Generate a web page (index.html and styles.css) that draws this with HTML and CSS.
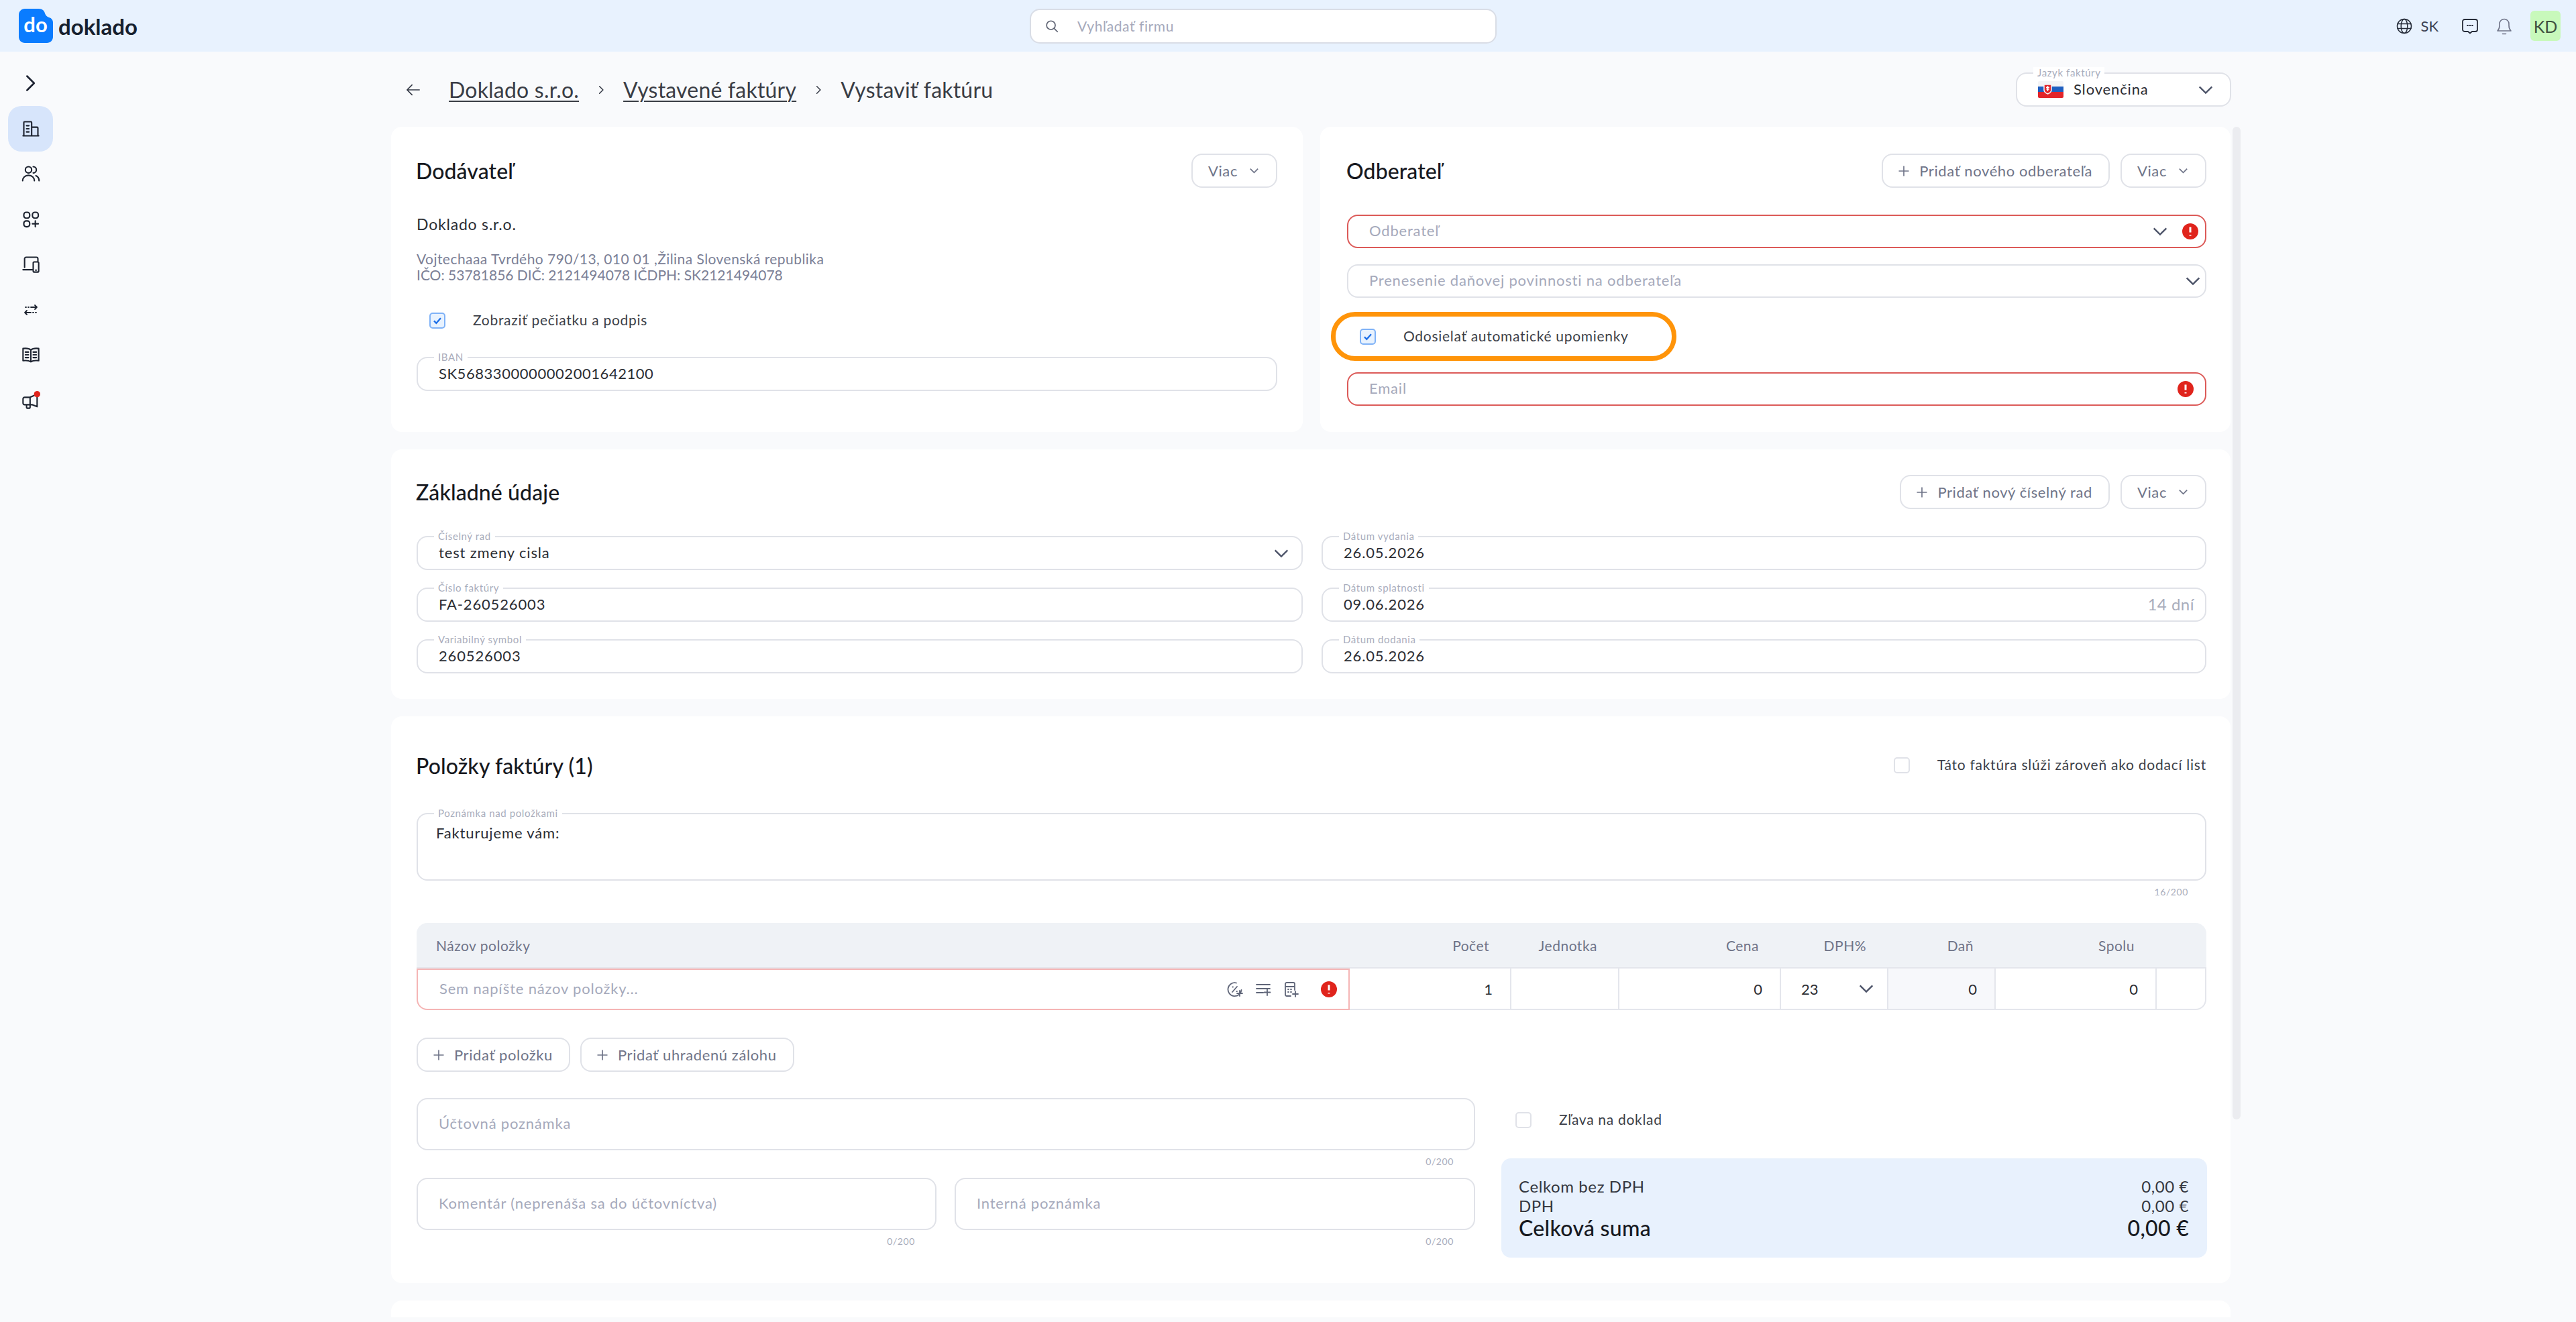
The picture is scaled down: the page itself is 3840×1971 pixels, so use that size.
FILE: index.html
```html
<!DOCTYPE html>
<html lang="sk">
<head>
    <meta charset="UTF-8">
    <meta name="viewport" content="width=device-width, initial-scale=1.0">
    <title>Vystaviť faktúru</title>
    <link rel="stylesheet" href="styles.css">
</head>
<body>

    <!-- shared icons -->
    <svg class="sprite" aria-hidden="true">
        <symbol id="chev" viewBox="0 0 24 24"><path d="M4 8l8 8 8-8"/></symbol>
        <symbol id="plus" viewBox="0 0 24 24"><path d="M12 3v18M3 12h18"/></symbol>
        <symbol id="check" viewBox="0 0 24 24"><path d="M6 12.5l4 4 8-9"/></symbol>
        <symbol id="err" viewBox="0 0 24 24"><circle class="err-bg" cx="12" cy="12" r="12"/><path class="err-mark" d="M12 5.5v8M12 17v1.5"/></symbol>
    </svg>

    <header class="topbar">
        <div class="brand">
            <svg class="logo" viewBox="0 0 51 51">
                <path class="logo-bg" d="M9 0h21c5 0 8 3 9 7 1 3 3 5 6 6 4 1 6 4 6 8v21c0 5-4 9-9 9H9c-5 0-9-4-9-9V9c0-5 4-9 9-9z"/>
                <text class="logo-text" x="25" y="35" text-anchor="middle">do</text>
            </svg>
            <span class="brand-name">doklado</span>
        </div>
        <div class="search">
            <svg class="ico search-ico" viewBox="0 0 24 24"><circle cx="10.5" cy="10.5" r="7"/><path d="M16 16l5 5"/></svg>
            <span>Vyhľadať firmu</span>
        </div>
        <div class="top-actions">
            <svg class="ico globe" viewBox="0 0 24 24"><circle cx="12" cy="12" r="10.5"/><ellipse cx="12" cy="12" rx="4.8" ry="10.5"/><path d="M2 8.5h20M2 15.5h20"/></svg>
            <span class="lang">SK</span>
            <svg class="ico chat" viewBox="0 0 26 24"><path d="M5 2h16a3 3 0 0 1 3 3v12a3 3 0 0 1-3 3h-5l-3 2.500-3-2.500H5a3 3 0 0 1-3-3V5a3 3 0 0 1 3-3z"/><path d="M9 11h1M12.500 11h1M16 11h1"/></svg>
            <svg class="ico bell" viewBox="0 0 24 26"><path d="M2 20c2-2 3-4 3-8V9.500a7 7 0 0 1 14 0V12c0 4 1 6 3 8z"/><path d="M9.500 24.500h5"/></svg>
            <div class="avatar">KD</div>
        </div>
    </header>

    <div class="layout">
        <nav class="sidebar">
            <svg class="ico toggle" viewBox="0 0 24 24"><path d="M8 3l9 9-9 9"/></svg>
            <a class="nav-item active"><svg class="ico" viewBox="0 0 24 24"><path d="M3 21V4a1 1 0 0 1 1-1h8a1 1 0 0 1 1 1v17M13 10h7a1 1 0 0 1 1 1v10M2 21h20M6.500 8h3M6.500 12h3M6.500 16h3"/></svg></a>
            <a class="nav-item"><svg class="ico" viewBox="0 0 24 24"><circle cx="9" cy="7" r="4"/><path d="M1.500 21c0-4 3-7 7.500-7s7.500 3 7.500 7M15 3a4 4 0 0 1 0 8M18.500 14.500c2.500 1 4 3.500 4 6.500"/></svg></a>
            <a class="nav-item"><svg class="ico" viewBox="0 0 24 24"><rect x="3" y="3" width="7.500" height="7.500" rx="3"/><rect x="14" y="3" width="7.500" height="7.500" rx="3"/><rect x="3" y="14" width="7.500" height="7.500" rx="3"/><path d="M17.700 14v7.500M14 17.700h7.500"/></svg></a>
            <a class="nav-item"><svg class="ico" viewBox="0 0 24 24"><path d="M4 16V5a2 2 0 0 1 2-2h13a2 2 0 0 1 2 2v3M2 19h12"/><rect x="15" y="9" width="7" height="13" rx="1.500"/><path d="M18 19.500h1"/></svg></a>
            <a class="nav-item"><svg class="ico small" viewBox="0 0 24 24"><path d="M4 8h1M8 8h1M12 8h9M18 5l3 3-3 3M20 16h-1M16 16h-1M12 16H3M6 13l-3 3 3 3"/></svg></a>
            <a class="nav-item"><svg class="ico" viewBox="0 0 24 24"><path d="M12 6v15M12 6C10 4 6 3.500 2 4v15.500c4-.5 8 0 10 1.500 2-1.500 6-2 10-1.500V4c-4-.5-8 0-10 2zM5 8.500h4M5 12h4M5 15.500h4M15 8.500h4M15 12h4M15 15.500h4"/></svg></a>
            <a class="nav-item"><svg class="ico" viewBox="0 0 24 24"><path d="M2 10a2 2 0 0 1 2-2h7l9-4v16l-6-2.500H4a2 2 0 0 1-2-2zM6.500 17.500v3a1.500 1.500 0 0 0 1.500 1.500h1.500a1.500 1.500 0 0 0 1.500-1.500v-3M11 8v9"/><circle class="nav-dot" cx="20" cy="4" r="4"/></svg></a>
        </nav>

        <main class="content">
            <div class="page-head">
                <svg class="ico back" viewBox="0 0 24 24"><path d="M22 12H3M10 4l-8 8 8 8"/></svg>
                <a class="crumb crumb-link">Doklado s.r.o.</a>
                <svg class="ico crumb-sep" viewBox="0 0 24 24"><path d="M8 3l9 9-9 9"/></svg>
                <a class="crumb crumb-link">Vystavené faktúry</a>
                <svg class="ico crumb-sep" viewBox="0 0 24 24"><path d="M8 3l9 9-9 9"/></svg>
                <span class="crumb">Vystaviť faktúru</span>
                <div class="field lang-select">
                    <span class="legend">Jazyk faktúry</span>
                    <svg class="flag" viewBox="0 0 38 25">
                        <rect class="flag-white" width="38" height="9"/>
                        <rect class="flag-blue" y="8" width="38" height="9"/>
                        <rect class="flag-red" y="16" width="38" height="9"/>
                        <path class="flag-crest" d="M9 5h11v8c0 3-3 5-5.500 6C12 18 9 16 9 13z"/>
                        <path class="flag-cross" d="M14.500 7v8M12 9.500h5M12.500 12h4"/>
                    </svg>
                    <span class="value lang-name">Slovenčina</span>
                    <svg class="ico-chev"><use href="#chev"/></svg>
                </div>
            </div>

            <div class="scroll-wrap">
                <div class="cards">
                    <div class="party-row">
                        <section class="card">
                            <div class="card-head">
                                <h2>Dodávateľ</h2>
                                <button class="btn">Viac <svg class="btn-chev"><use href="#chev"/></svg></button>
                            </div>
                            <p class="company">Doklado s.r.o.</p>
                            <p class="address">Vojtechaaa Tvrdého 790/13, 010 01 ,Žilina Slovenská republika<br><span class="ids">IČO: 53781856 DIČ: 2121494078 IČDPH: SK2121494078</span></p>
                            <label class="check-row stamp">
                                <span class="checkbox on"><svg><use href="#check"/></svg></span>
                                <span class="check-label">Zobraziť pečiatku a podpis</span>
                            </label>
                            <div class="field">
                                <span class="legend">IBAN</span>
                                <span class="value iban">SK5683300000002001642100</span>
                            </div>
                        </section>

                        <section class="card">
                            <div class="card-head">
                                <h2>Odberateľ</h2>
                                <div class="btn-group">
                                    <button class="btn"><svg class="btn-plus"><use href="#plus"/></svg> Pridať nového odberateľa</button>
                                    <button class="btn btn-more">Viac <svg class="btn-chev"><use href="#chev"/></svg></button>
                                </div>
                            </div>
                            <div class="customer-fields">
                                <div class="field invalid partner">
                                    <span class="placeholder grow">Odberateľ</span>
                                    <svg class="ico-chev"><use href="#chev"/></svg>
                                    <svg class="ico-err"><use href="#err"/></svg>
                                </div>
                                <div class="field transfer">
                                    <span class="placeholder grow">Prenesenie daňovej povinnosti na odberateľa</span>
                                    <svg class="ico-chev"><use href="#chev"/></svg>
                                </div>
                                <label class="check-row reminder">
                                    <span class="checkbox on"><svg><use href="#check"/></svg></span>
                                    <span class="check-label">Odosielať automatické upomienky</span>
                                </label>
                                <div class="field invalid email">
                                    <span class="placeholder grow">Email</span>
                                    <svg class="ico-err"><use href="#err"/></svg>
                                </div>
                            </div>
                        </section>
                    </div>

                    <section class="card basics">
                        <div class="card-head">
                            <h2>Základné údaje</h2>
                            <div class="btn-group">
                                <button class="btn"><svg class="btn-plus"><use href="#plus"/></svg> Pridať nový číselný rad</button>
                                <button class="btn btn-more">Viac <svg class="btn-chev"><use href="#chev"/></svg></button>
                            </div>
                        </div>
                        <div class="basics-grid">
                            <div class="field series">
                                <span class="legend">Číselný rad</span>
                                <span class="value grow">test zmeny cisla</span>
                                <svg class="ico-chev"><use href="#chev"/></svg>
                            </div>
                            <div class="field">
                                <span class="legend">Dátum vydania</span>
                                <span class="value">26.05.2026</span>
                            </div>
                            <div class="field">
                                <span class="legend">Číslo faktúry</span>
                                <span class="value">FA-260526003</span>
                            </div>
                            <div class="field due-field">
                                <span class="legend">Dátum splatnosti</span>
                                <span class="value grow">09.06.2026</span>
                                <span class="due">14 dní</span>
                            </div>
                            <div class="field">
                                <span class="legend">Variabilný symbol</span>
                                <span class="value">260526003</span>
                            </div>
                            <div class="field">
                                <span class="legend">Dátum dodania</span>
                                <span class="value">26.05.2026</span>
                            </div>
                        </div>
                    </section>

                    <section class="card items">
                        <div class="card-head items-head">
                            <h2>Položky faktúry (1)</h2>
                            <label class="check-row delivery">
                                <span class="checkbox"></span>
                                <span class="check-label">Táto faktúra slúži zároveň ako dodací list</span>
                            </label>
                        </div>

                        <div class="field note">
                            <span class="legend">Poznámka nad položkami</span>
                            <span class="value">Fakturujeme vám:</span>
                        </div>
                        <div class="counter note-count">16/200</div>

                        <div class="table">
                            <div class="tr th">
                                <div class="cell name">Názov položky</div>
                                <div class="cell">Počet</div>
                                <div class="cell">Jednotka</div>
                                <div class="cell">Cena</div>
                                <div class="cell">DPH%</div>
                                <div class="cell">Daň</div>
                                <div class="cell">Spolu</div>
                                <div class="cell"></div>
                            </div>
                            <div class="tr td">
                                <div class="cell name">
                                    <span class="placeholder grow">Sem napíšte názov položky...</span>
                                    <svg class="ico row-ico" viewBox="0 0 24 24"><path d="M14 2.500A10 10 0 1 0 21.500 13M8 16l7-8M8.500 8.500h.5M14.500 15h.5M19 14v8M15 18h8"/></svg>
                                    <svg class="ico row-ico" viewBox="0 0 24 24"><path d="M2 5h20M2 11h20M2 17h10M18 12v9M13.500 16.500h9"/></svg>
                                    <svg class="ico row-ico" viewBox="0 0 24 24"><path d="M11 22H5a2 2 0 0 1-2-2V4a2 2 0 0 1 2-2h10a2 2 0 0 1 2 2v9M3 8h14M7 12h1M11 12h1M7 16h1M11 16h1M18 15v8M14 19h8"/></svg>
                                    <svg class="ico-err row-err"><use href="#err"/></svg>
                                </div>
                                <div class="cell">1</div>
                                <div class="cell"></div>
                                <div class="cell">0</div>
                                <div class="cell vat"><span class="grow">23</span><svg class="ico-chev"><use href="#chev"/></svg></div>
                                <div class="cell tax">0</div>
                                <div class="cell">0</div>
                                <div class="cell"></div>
                            </div>
                        </div>

                        <div class="add-row">
                            <button class="btn"><svg class="btn-plus"><use href="#plus"/></svg> Pridať položku</button>
                            <button class="btn"><svg class="btn-plus"><use href="#plus"/></svg> Pridať uhradenú zálohu</button>
                        </div>

                        <div class="bottom-grid">
                            <div class="notes">
                                <div class="notes-full">
                                    <div class="field note-box"><span class="placeholder">Účtovná poznámka</span></div>
                                    <div class="counter">0/200</div>
                                </div>
                                <div>
                                    <div class="field note-box"><span class="placeholder">Komentár (neprenáša sa do účtovníctva)</span></div>
                                    <div class="counter">0/200</div>
                                </div>
                                <div>
                                    <div class="field note-box"><span class="placeholder">Interná poznámka</span></div>
                                    <div class="counter">0/200</div>
                                </div>
                            </div>
                            <div class="summary-col">
                                <label class="check-row discount">
                                    <span class="checkbox"></span>
                                    <span class="check-label">Zľava na doklad</span>
                                </label>
                                <div class="summary">
                                    <div class="sum-row"><span>Celkom bez DPH</span><span>0,00 €</span></div>
                                    <div class="sum-row"><span>DPH</span><span>0,00 €</span></div>
                                    <div class="sum-row total"><span>Celková suma</span><span>0,00 €</span></div>
                                </div>
                            </div>
                        </div>
                    </section>

                    <section class="card stub"></section>
                </div>
                <div class="scrollbar"></div>
            </div>
        </main>
    </div>

</body>
</html>
```

FILE: styles.css
```css
* {
    margin: 0;
    padding: 0;
    box-sizing: border-box;
}

body {
    height: 1971px;
    overflow: hidden;
    background-color: #f9fafc;
    color: #2b2d33;
    font-family: Lato, "Noto Sans", sans-serif;
    font-size: 22px;
}

.sprite {
    display: none;
}

.ico {
    fill: none;
    stroke: currentColor;
    stroke-width: 1.8;
    stroke-linecap: round;
    stroke-linejoin: round;
}

/* top bar */
.topbar {
    height: 77px;
    background-color: #e8f2fe;
    display: flex;
    align-items: center;
    padding-left: 28px;
    padding-right: 23px;
}

.brand {
    flex: 0 0 1507px;
    display: flex;
    align-items: center;
    gap: 8px;
}

.logo {
    width: 51px;
    height: 51px;
}

.logo-bg {
    fill: #0a7cff;
}

.logo-text {
    fill: #fff;
    font-size: 31px;
    font-weight: 700;
}

.brand-name {
    font-size: 33px;
    font-weight: 700;
    color: #16202e;
}

.search {
    width: 696px;
    height: 52px;
    background-color: #fff;
    border: 2px solid #d9dde6;
    border-radius: 15px;
    display: flex;
    align-items: center;
    padding-left: 20px;
    gap: 27px;
    font-size: 21px;
    letter-spacing: 0.6px;
    color: #a5a9bb;
}

.search-ico {
    width: 22px;
    height: 22px;
    color: #5b6070;
}

.top-actions {
    margin-left: auto;
    display: flex;
    align-items: center;
}

.globe {
    width: 24px;
    height: 24px;
    color: #252b38;
    stroke-width: 1.5;
}

.lang {
    margin-left: 12px;
    margin-right: 34px;
    font-size: 22px;
    color: #3b4152;
}

.chat {
    width: 26px;
    height: 24px;
    color: #252b38;
}

.bell {
    width: 24px;
    height: 26px;
    margin-left: 26px;
    margin-right: 27px;
    color: #6f7488;
    stroke-width: 1.6;
}

.avatar {
    width: 45px;
    height: 45px;
    border-radius: 6px;
    background-color: #c8f9bb;
    color: #3f4f3f;
    font-size: 25px;
    display: flex;
    align-items: center;
    justify-content: center;
}

/* layout */
.layout {
    display: flex;
}

.sidebar {
    flex: 0 0 583px;
    padding-top: 33px;
    padding-left: 12px;
    display: flex;
    flex-direction: column;
    align-items: flex-start;
}

.toggle {
    width: 28px;
    height: 28px;
    margin-left: 19px;
    margin-bottom: 20px;
    color: #1b2130;
    stroke-width: 2.2;
}

.nav-item {
    width: 67px;
    height: 67.5px;
    border-radius: 20px;
    display: flex;
    align-items: center;
    justify-content: center;
    color: #1e2431;
}

.nav-item svg {
    width: 28px;
    height: 28px;
}

.nav-item svg.small {
    width: 24px;
    height: 24px;
}

.nav-item.active {
    background-color: #d7e5fb;
}

.nav-dot {
    fill: #e0241c;
    stroke: none;
}

.content {
    flex: 0 0 2757px;
}

/* breadcrumb */
.page-head {
    height: 112px;
    padding-top: 31px;
    padding-bottom: 30px;
    padding-left: 22px;
    width: 2743px;
    display: flex;
    align-items: center;
}

.back {
    width: 22px;
    height: 22px;
    margin-right: 42px;
    color: #333844;
}

.crumb {
    font-size: 32px;
    letter-spacing: 0.2px;
    color: #3a3d45;
    line-height: 40px;
}

.crumb-link {
    text-decoration: underline;
    text-underline-offset: 4px;
    text-decoration-thickness: 2px;
}

.crumb-sep {
    width: 14px;
    height: 14px;
    margin-left: 26px;
    margin-right: 26px;
    color: #333844;
    stroke-width: 2.6;
}

.lang-select {
    margin-left: auto;
    width: 321px;
    padding-left: 29px;
    padding-right: 15px;
}

.flag {
    width: 38px;
    height: 25px;
    margin-right: 15px;
    border-radius: 2px;
    flex: none;
}

.flag-white { fill: #f4f4f6; }
.flag-blue { fill: #1f5fc0; }
.flag-red { fill: #e2242a; }
.flag-crest { fill: #e2242a; stroke: #f4f4f6; stroke-width: 1.500; }
.flag-cross { fill: none; stroke: #fff; stroke-width: 1.600; }

.lang-name {
    flex: 1;
}

/* cards */
.scroll-wrap {
    height: 1775px;
    overflow: hidden;
    display: flex;
    align-items: flex-start;
}

.cards {
    width: 2742px;
    display: flex;
    flex-direction: column;
    gap: 26px;
}

.scrollbar {
    width: 12px;
    height: 1480px;
    margin-left: 3px;
    border-radius: 6px;
    background-color: #ebecf0;
}

.party-row {
    display: grid;
    grid-template-columns: 1359px 1357px;
    gap: 26px;
}

.card {
    background-color: #fff;
    border-radius: 16px;
    padding: 40px 38px 0;
    height: 455px;
}

.party-row .card:last-child {
    padding-right: 36px;
    padding-left: 40px;
}

.card-head {
    height: 51px;
    display: flex;
    align-items: center;
    justify-content: space-between;
}

h2 {
    font-size: 32px;
    font-weight: 500;
    color: #17191f;
    letter-spacing: 0.1px;
    margin-left: -1px;
}

/* buttons */
.btn {
    height: 51px;
    padding: 0 24px 0 23px;
    background-color: #fff;
    border: 2px solid #e0e2e8;
    border-radius: 16px;
    color: #6f7488;
    font-family: inherit;
    font-size: 22px;
    letter-spacing: 0.6px;
    display: inline-flex;
    align-items: center;
    gap: 16px;
}

.btn-group {
    display: flex;
    gap: 16px;
}

.btn-chev {
    width: 17px;
    height: 17px;
    fill: none;
    stroke: #6f7488;
    stroke-width: 2.4;
}

.btn-plus {
    width: 20px;
    height: 20px;
    margin-left: -2px;
    margin-right: -3px;
    fill: none;
    stroke: #6f7488;
    stroke-width: 2;
}

/* inputs */
.field {
    position: relative;
    height: 51px;
    border: 2px solid #e0e2e8;
    border-radius: 16px;
    background-color: #fff;
    padding: 0 22px 0 31px;
    display: flex;
    align-items: center;
}

.legend {
    position: absolute;
    top: -10px;
    left: 24px;
    padding: 0 6px;
    background-color: #fff;
    font-size: 15px;
    line-height: 16px;
    letter-spacing: 0.6px;
    color: #a9adbc;
}

.value {
    font-size: 22px;
    letter-spacing: 0.85px;
    color: #2b2d33;
    padding-bottom: 3px;
}

.iban {
    letter-spacing: 0.55px;
}

.placeholder {
    font-size: 22px;
    letter-spacing: 0.8px;
    color: #a5a9bb;
    padding-bottom: 3px;
}

.grow {
    flex: 1;
}

.ico-chev {
    width: 28px;
    height: 28px;
    fill: none;
    stroke: #4c5368;
    stroke-width: 2;
    flex: none;
}

.ico-err {
    width: 24px;
    height: 24px;
    flex: none;
}

.err-bg {
    fill: #e0241c;
}

.err-mark {
    fill: none;
    stroke: #fff;
    stroke-width: 3;
}

.invalid {
    border-color: #dc5a58;
}

.due {
    font-size: 24px;
    letter-spacing: 0.5px;
    color: #a9adbc;
    padding-bottom: 3px;
}

.due-field {
    padding-right: 16px;
}

.series {
    padding-right: 16px;
}

/* supplier */
.company {
    margin-top: 40px;
    font-size: 23px;
    line-height: 28px;
    letter-spacing: 0.8px;
}

.address {
    margin-top: 26px;
    font-size: 21px;
    line-height: 24px;
    letter-spacing: 0.45px;
    color: #7b8096;
}

.ids {
    letter-spacing: 0;
}

.check-row {
    display: flex;
    align-items: center;
    font-size: 21px;
    letter-spacing: 0.7px;
    color: #3c3f48;
}

.check-label {
    padding-bottom: 3px;
}

.checkbox {
    width: 24px;
    height: 24px;
    border: 2px solid #e0e2e8;
    border-radius: 5px;
    flex: none;
    background-color: #fff;
}

.checkbox.on {
    border-color: #7fb2f7;
    background-color: #e8f2fe;
}

.checkbox svg {
    display: block;
    width: 20px;
    height: 20px;
    fill: none;
    stroke: #1c6fe8;
    stroke-width: 2.8;
}

.stamp {
    height: 24px;
    margin-top: 44px;
    margin-bottom: 42px;
    padding-left: 19px;
    gap: 41px;
}

/* customer */
.customer-fields {
    margin-top: 40px;
    display: flex;
    flex-direction: column;
}

.customer-fields .field {
    height: 50px;
}

.customer-fields .field + .field {
    margin-top: 24px;
}

.partner {
    padding-right: 10px;
    gap: 19px;
}

.transfer {
    padding-right: 4px;
}

.reminder {
    width: 515px;
    height: 73px;
    margin-top: 21px;
    margin-bottom: 17px;
    margin-left: -24px;
    border: 7px solid #ff9409;
    border-radius: 36px;
    padding-left: 36px;
    gap: 41px;
}

.email {
    padding-right: 17px;
}

/* basic data */
.basics {
    height: 372px;
    padding-top: 38px;
    padding-right: 36px;
}

.basics-grid {
    margin-top: 40px;
    display: grid;
    grid-template-columns: 1321px 1319px;
    column-gap: 28px;
    row-gap: 26px;
}

/* items */
.items {
    height: 845px;
    padding-top: 47px;
    padding-right: 36px;
}

.items-head {
    height: 52px;
}

.delivery {
    gap: 41px;
    letter-spacing: 0.75px;
    margin-left: auto;
}

.note {
    margin-top: 45px;
    height: 101px;
    align-items: flex-start;
    padding-top: 14px;
    padding-left: 27px;
}

.counter {
    height: 38px;
    padding-top: 8px;
    padding-right: 32px;
    text-align: right;
    font-size: 14px;
    letter-spacing: 0.6px;
    color: #a9adbc;
}

.note-count {
    height: 63px;
    padding-right: 27px;
}

.table {
    border-radius: 16px;
}

.tr {
    display: grid;
    grid-template-columns: 1391px 241px 161px 241px 160px 160px 240px 74px;
}

.th {
    height: 68px;
    background-color: #eff2f6;
    border-radius: 16px 16px 0 0;
    border-bottom: 2px solid #e4e6ec;
    font-size: 21px;
    letter-spacing: 0.5px;
    color: #6f7488;
}

.th .cell {
    display: flex;
    align-items: center;
    justify-content: flex-end;
    padding-right: 33px;
}

.th .cell.name {
    justify-content: flex-start;
    padding-left: 29px;
}

.td {
    height: 62px;
    font-size: 22px;
    color: #2b2d33;
}

.td .cell {
    display: flex;
    align-items: center;
    justify-content: flex-end;
    padding-right: 26px;
    border-right: 2px solid #e4e6ec;
    border-bottom: 2px solid #e4e6ec;
}

.td .cell:last-child {
    border-bottom-right-radius: 16px;
}

.td .cell.name {
    justify-content: flex-start;
    padding-left: 32px;
    padding-right: 17px;
    border: 2px solid #f5b5b5;
    border-bottom-left-radius: 16px;
}

.row-ico {
    width: 24px;
    height: 24px;
    margin-right: 18px;
    color: #5f6578;
}

.ico-err.row-err {
    margin-left: 14px;
}

.td .cell.vat {
    padding-left: 30px;
    padding-right: 17px;
    justify-content: flex-start;
}

.td .cell.tax {
    background-color: #f7f8fb;
}

.add-row {
    margin-top: 41px;
    display: flex;
    gap: 15px;
}

.bottom-grid {
    margin-top: 39px;
    display: grid;
    grid-template-columns: 1578px 1052px;
    column-gap: 39px;
}

.notes {
    display: grid;
    grid-template-columns: 775px 776px;
    column-gap: 27px;
}

.notes-full {
    grid-column: 1 / 3;
}

.note-box {
    height: 78px;
    background-color: #fff;
}

.summary-col {
    display: flex;
    flex-direction: column;
}

.discount {
    height: 90px;
    padding-left: 21px;
    padding-bottom: 24px;
    gap: 41px;
}

.summary {
    height: 148px;
    background-color: #e8f1fd;
    border-radius: 14px;
    padding: 27px 27px 0 26px;
}

.sum-row {
    display: flex;
    justify-content: space-between;
    font-size: 24px;
    line-height: 29px;
    letter-spacing: 0.6px;
    color: #34373f;
}

.sum-row.total {
    font-size: 32px;
    line-height: 38px;
    font-weight: 500;
    letter-spacing: 0.3px;
    color: #17191f;
}

.stub {
    height: 60px;
}
```
